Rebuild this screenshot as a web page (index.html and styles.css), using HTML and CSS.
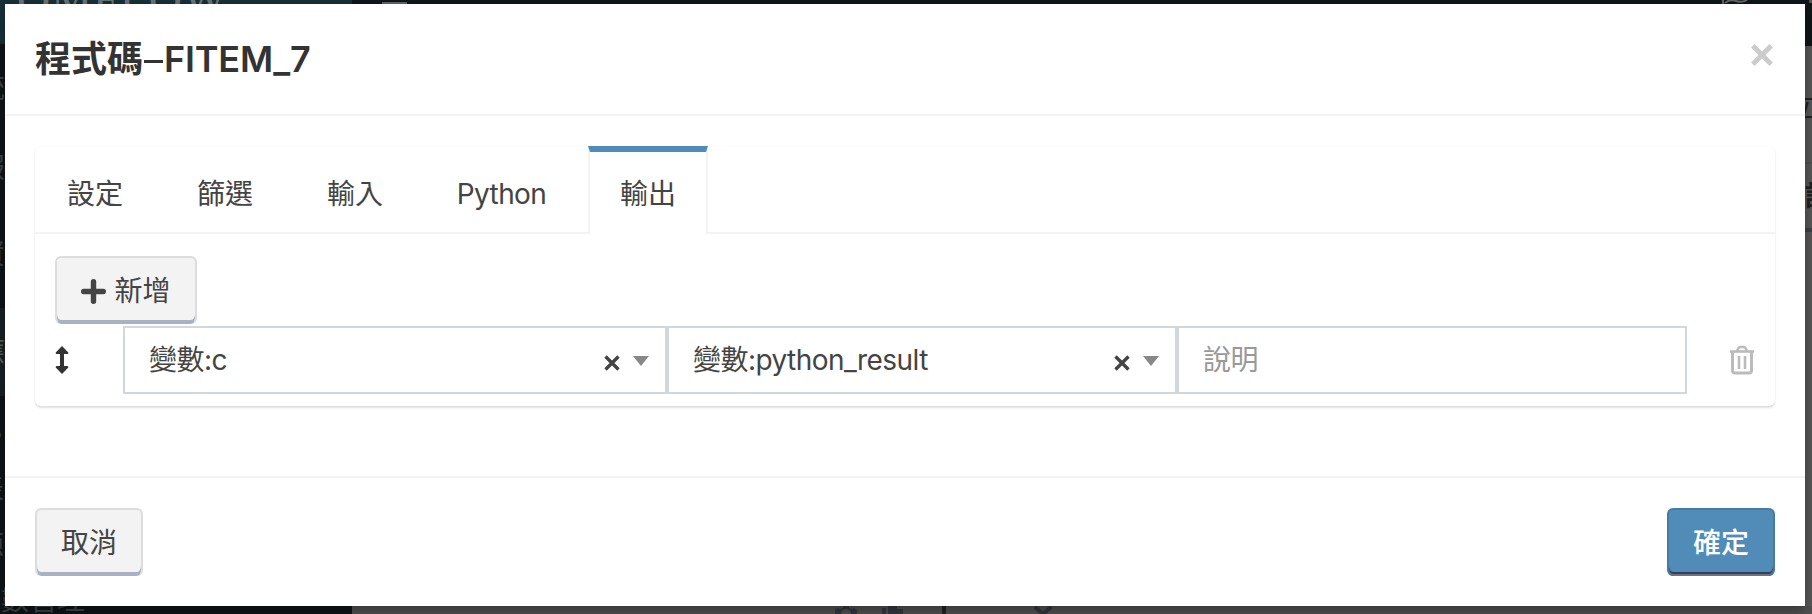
FILE: index.html
```html
<!DOCTYPE html>
<html lang="zh-Hant">
<head>
<meta charset="utf-8">
<title>程式碼-FITEM_7</title>
<link rel="stylesheet" href="styles.css">
</head>
<body>
<div class="app">
  <aside class="sidebar">
    <div class="brand">OMFLOW</div>
    <nav class="side-menu">
      <span class="s1">統</span><span class="s2">服</span><span class="s3">資</span><span class="s4">應</span><span class="s5">心</span><span class="s6">表</span><span class="s7">源</span><span class="s8">數管理</span>
    </nav>
  </aside>
  <main class="page">
    <div class="topbar">
      <i class="burger"></i>
      <svg class="flag" viewBox="0 0 26 4"><path d="M1 0v4M3 3Q8-1 14 1t11-1" fill="none" stroke="#666" stroke-width="2"/></svg>
      <i class="dot"></i>
    </div>
    <div class="canvas">
      <div class="side-panel"><span class="p1">立</span><span class="p2">說</span></div>
      <div class="toolrow">
        <svg viewBox="0 0 220 8"><g fill="#34363e"><path d="M0 8V3l3-1 2 1 3-1V0h6v2l3 1 2-1 3 2v4h-6a5 5 0 0 0-10 0z"/><path d="M47 2h4v6h-4zM53 0h9v3h6v5H53z"/></g><path d="M109 0v8" stroke="#222" stroke-width="4"/><path d="M201 2l7 6 7-6" fill="none" stroke="#34363e" stroke-width="4" stroke-linecap="round"/></svg>
      </div>
    </div>
  </main>
</div>

<div class="modal">
  <header class="modal-header">
    <h4>程式碼<span class="dash"></span><span class="latin">FITEM_7</span></h4>
    <button class="close" aria-label="Close"><svg viewBox="0 0 22 22"><path d="M1.800 1.800l18.400 18.400M20.200 1.800L1.800 20.200" stroke="#ccc" stroke-width="5"/></svg></button>
  </header>
  <section class="modal-body">
    <div class="tabs-box">
      <ul class="tabs">
        <li>設定</li><li>篩選</li><li>輸入</li><li class="python">Python</li><li class="active">輸出</li>
      </ul>
      <div class="tab-content">
        <button class="btn add"><svg viewBox="0 0 25 25"><path d="M12.500 2.700v19.600M2.700 12.500h19.600" stroke="#444" stroke-width="5.400" stroke-linecap="round"/></svg>新增</button>
        <div class="row">
          <svg class="move" viewBox="0 0 14 28"><path d="M7 0l6.300 6.400q.2 1.600-1 1.600H9v12h3.300q1.200 0 1 1.600L7 28 .7 21.600q-.2-1.600 1-1.600H5V8H1.700Q.5 8 .7 6.400z" fill="#333"/></svg>
          <div class="field first"><span>變數:c</span><svg class="clear" viewBox="0 0 16 16"><path d="M1.500 1.500l13 13M14.500 1.500l-13 13" stroke="#444" stroke-width="3.400"/></svg><i class="caret"></i></div>
          <div class="field"><span>變數:python_result</span><svg class="clear" viewBox="0 0 16 16"><path d="M1.500 1.500l13 13M14.500 1.500l-13 13" stroke="#444" stroke-width="3.400"/></svg><i class="caret"></i></div>
          <div class="field placeholder"><span>說明</span></div>
          <svg class="trash" viewBox="0 0 26 30" fill="none" stroke="#bbb"><path d="M1 6.500h24" stroke-width="2.600"/><path d="M3.500 7v18.500q0 2.500 2.500 2.500h14q2.500 0 2.500-2.500V7" stroke-width="3"/><path d="M8 6l1.500-3q.5-1 1.500-1h4q1 0 1.500 1L18 6" stroke-width="2.600"/><path d="M10 11v13M16 11v13" stroke-width="2.600"/></svg>
        </div>
      </div>
    </div>
  </section>
  <footer class="modal-footer">
    <button class="btn">取消</button>
    <button class="btn primary">確定</button>
  </footer>
</div>
</body>
</html>
```
FILE: styles.css
```css
* { box-sizing: border-box; }
body { margin: 0; height: 614px; overflow: hidden; color: #444; font: 28px/40px Inter, "Noto Sans CJK TC", sans-serif; }
button { font: inherit; color: inherit; }
i { display: block; }

.app { display: flex; height: 614px; background: #575757; }
.sidebar { width: 352px; background: #0f1416; overflow: hidden; }
.brand { height: 44px; padding-left: 17px; background: #193139; color: #6b767a; font: 46px/0 "Liberation Serif", serif; letter-spacing: 1px; overflow: hidden; }
.side-menu { display: flex; flex-direction: column; height: 570px; color: #3c4446; white-space: nowrap; }
.side-menu span { height: 80px; text-indent: -23px; line-height: 88px; flex: none; }
.side-menu .s3 { height: 104px; line-height: 100px; }
.side-menu .s4 { height: 88px; background: #182124; color: #596164; }
.side-menu .s5 { height: 60px; line-height: 68px; text-indent: -26px; }
.side-menu .s6 { height: 60px; line-height: 66px; text-indent: -24px; }
.side-menu .s7 { height: 64px; line-height: 60px; text-indent: -24px; }
.side-menu .s8 { height: 34px; line-height: 40px; text-indent: 1px; }
.page { flex: 1; display: flex; flex-direction: column; }
.topbar { height: 46px; background: #101719; display: flex; align-items: flex-start; }
.burger { width: 25px; height: 2px; margin: 2px 0 0 30px; background: #666; }
.flag { width: 26px; height: 4px; margin-left: 1315px; }
.dot { width: 3px; height: 3px; margin-left: 61px; background: #555; }
.canvas { flex: 1; display: flex; flex-direction: column; justify-content: space-between; }
.side-panel { align-self: flex-end; width: 7px; height: 340px; color: #222; overflow: hidden; display: flex; flex-direction: column; }
.side-panel span { height: 118px; line-height: 122px; text-indent: -18px; border-bottom: 2px solid #505050; }
.side-panel .p2 { height: 68px; line-height: 64px; text-indent: 0; border-bottom: 4px solid #3f4148; font-weight: 700; }
.toolrow { height: 8px; padding-left: 483px; background: #505050; }
.toolrow svg { display: block; width: 220px; height: 8px; }

.modal { position: absolute; left: 5px; top: 4px; width: 1800px; height: 602px; display: flex; flex-direction: column; background: #fff; box-shadow: 0 4px 12px rgba(0,0,0,.35); }
.modal-header { height: 112px; padding: 0 30px; display: flex; justify-content: space-between; border-bottom: 2px solid #f3f3f3; }
h4 { margin: 32px 0 0; font-size: 36px; line-height: 46px; font-weight: 600; color: #333; white-space: nowrap; }
h4 .dash { display: inline-block; width: 19px; height: 3px; margin: 0 1px; vertical-align: 9px; background: #333; }
h4 .latin { letter-spacing: -0.2px; }
.close { width: 22px; height: 22px; margin: 40px 2px 0 0; padding: 0; border: 0; background: none; }
.close svg { display: block; width: 22px; height: 22px; }
.modal-body { height: 360px; padding: 30px; }
.tabs-box { height: 260px; border-radius: 6px; box-shadow: 0 2px 2px rgba(0,0,0,.12), 0 0 1px rgba(0,0,0,.08); }
.tabs { display: flex; height: 88px; margin: 0; padding: 0; list-style: none; border-bottom: 2px solid #f3f3f3; }
.tabs li { width: 120px; height: 88px; margin-right: 10px; padding: 6px 0 0; line-height: 84px; text-align: center; }
.tabs .python { width: 153px; letter-spacing: -0.6px; }
.tabs .active { background: #fff; border: 2px solid #f3f3f3; border-top: 6px solid #518cb8; border-bottom: 0; padding: 0; }
.tab-content { padding: 22px 20px 0; }
.btn { display: flex; align-items: center; justify-content: center; width: 108px; height: 68px; padding: 0; background: #f3f3f3; border: 2px solid #ddd; border-bottom: 0; border-radius: 6px; box-shadow: inset 0 -4px #a9b1c5; }
.add { width: 142px; }
.add svg { width: 25px; height: 25px; margin-right: 8px; }
.row { display: flex; align-items: center; height: 68px; margin-top: 2px; }
.move { width: 14px; height: 28px; margin-right: 54px; }
.field { width: 510px; height: 68px; border: 2px solid #d2d6de; padding: 0 16px 0 24px; display: flex; align-items: center; flex: none; }
.field.first { width: 544px; }
.field span { flex: 1; letter-spacing: -0.55px; }
.placeholder { color: #999; }
.clear { width: 16px; height: 16px; margin: 5px 13px 0 0; }
.caret { border: 8px solid transparent; border-top: 10px solid #888; border-bottom: 0; margin-top: 1px; }
.trash { width: 26px; height: 30px; margin-left: 42px; }
.modal-footer { display: flex; justify-content: space-between; height: 130px; padding: 30px; border-top: 2px solid #f3f3f3; }
.primary { color: #fff; font-weight: 500; background: #518cb8; border-color: #467ba4; box-shadow: inset 0 -2px #6b7485, inset 0 -4px #3a3f59; }
```
